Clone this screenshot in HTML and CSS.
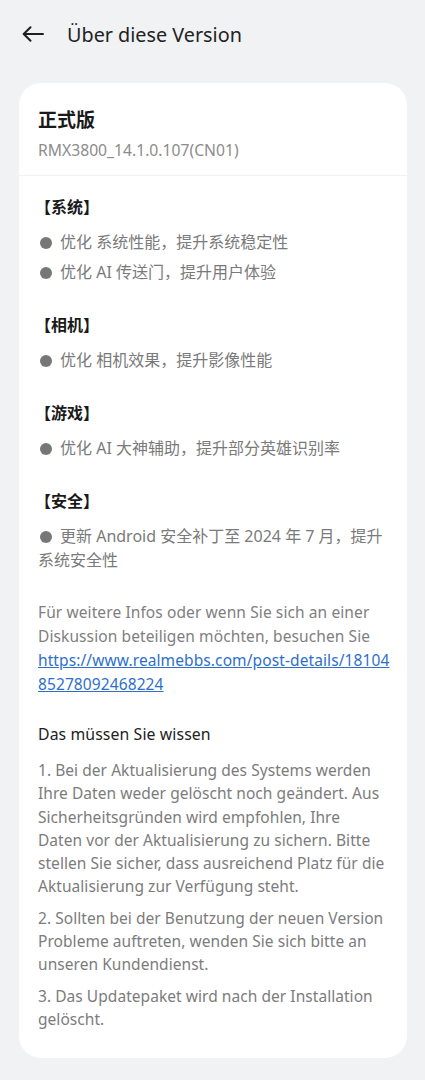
FILE: index.html
```html
<!DOCTYPE html>
<html lang="de">
<head>
<meta charset="utf-8">
<title>Über diese Version</title>
<link rel="stylesheet" href="styles.css">
</head>
<body>
<header class="topbar">
  <svg class="back" width="22" height="16" viewBox="0 0 22 16" aria-hidden="true">
    <path d="M21 8H2 M8.5 1.2L1.7 8l6.8 6.8" fill="none" stroke="#1f1f1f" stroke-width="2" stroke-linecap="round" stroke-linejoin="round"/>
  </svg>
  <h1 class="title">Über diese Version</h1>
</header>
<main class="card">
  <div class="card-head">
    <div class="ver-name">正式版</div>
    <div class="ver-code">RMX3800_14.1.0.107(CN01)</div>
  </div>
  <div class="card-body">
    <section class="sec">
      <h2 class="sec-title">【系统】</h2>
      <p class="item"><span class="dot"></span>优化 系统性能，提升系统稳定性</p>
      <p class="item"><span class="dot"></span>优化 AI 传送门，提升用户体验</p>
    </section>
    <section class="sec">
      <h2 class="sec-title">【相机】</h2>
      <p class="item"><span class="dot"></span>优化 相机效果，提升影像性能</p>
    </section>
    <section class="sec">
      <h2 class="sec-title">【游戏】</h2>
      <p class="item"><span class="dot"></span>优化 AI 大神辅助，提升部分英雄识别率</p>
    </section>
    <section class="sec">
      <h2 class="sec-title">【安全】</h2>
      <p class="item"><span class="dot"></span>更新 Android 安全补丁至 2024 年 7 月，提升<br>系统安全性</p>
    </section>
    <p class="more">Für weitere Infos oder wenn Sie sich an einer<br>Diskussion beteiligen möchten, besuchen Sie<br><a class="link" href="#">https://www.realmebbs.com/post-details/18104<br>85278092468224</a></p>
    <h3 class="know-title">Das müssen Sie wissen</h3>
    <ol class="know">
      <li>1. Bei der Aktualisierung des Systems werden<br>Ihre Daten weder gelöscht noch geändert. Aus<br>Sicherheitsgründen wird empfohlen, Ihre<br>Daten vor der Aktualisierung zu sichern. Bitte<br>stellen Sie sicher, dass ausreichend Platz für die<br>Aktualisierung zur Verfügung steht.</li>
      <li>2. Sollten bei der Benutzung der neuen Version<br>Probleme auftreten, wenden Sie sich bitte an<br>unseren Kundendienst.</li>
      <li>3. Das Updatepaket wird nach der Installation<br>gelöscht.</li>
    </ol>
  </div>
</main>
</body>
</html>
```
FILE: styles.css
```css
* { box-sizing: border-box; }
html, body { margin: 0; padding: 0; }
body {
  background: #f1f2f4;
  font-family: "Noto Sans", "Noto Sans CJK SC", sans-serif;
  color: #1f1f1f;
  width: 425px;
  min-height: 1080px;
}
.topbar {
  height: 68px;
  display: flex;
  align-items: center;
  padding-left: 22px;
}
.back { display: block; flex: none; }
.title {
  margin: 0 0 0 23px;
  font-size: 19.8px;
  font-weight: 400;
  color: #222;
}
.card {
  margin: 15px 18px 0 19px;
  background: #fff;
  border-radius: 22px;
  padding-bottom: 27px;
}
.card-head {
  padding: 22px 19px 14px;
  border-bottom: 1px solid #f1f1f2;
}
.ver-name {
  font-family: "Noto Sans CJK SC", sans-serif;
  font-size: 19px;
  font-weight: 700;
  line-height: 28px;
  color: #1a1a1a;
}
.ver-code {
  margin-top: 6px;
  font-size: 15.7px;
  line-height: 22px;
  color: #8c8c8c;
}
.card-body {
  padding: 18px 19px 0;
}
.sec { margin-bottom: 28px; }
.sec-title {
  margin: 0 0 12px -3px;
  font-family: "Noto Sans CJK SC", sans-serif;
  font-size: 16px;
  font-weight: 700;
  line-height: 24px;
  color: #1a1a1a;
}
.item {
  margin: 0 0 6px;
  font-family: "Noto Sans", "Noto Sans CJK SC", sans-serif;
  font-size: 16px;
  line-height: 24px;
  color: #7a7a7a;
}
.item:last-child { margin-bottom: 0; }
.dot {
  display: inline-block;
  width: 12px;
  height: 12px;
  border-radius: 50%;
  background: #777;
  margin: 0 8px 0 2px;
  vertical-align: -1px;
}
.more {
  margin: 0 0 26px;
  font-size: 15.5px;
  letter-spacing: 0.1px;
  line-height: 24px;
  color: #808080;
  white-space: nowrap;
}
.link {
  color: #2d6fcc;
  text-decoration: underline;
}
.know-title {
  margin: 0 0 13px;
  font-size: 15.8px;
  letter-spacing: 0.1px;
  font-weight: 400;
  line-height: 24px;
  color: #222;
}
.know {
  list-style: none;
  margin: 0;
  padding: 0;
}
.know li {
  font-size: 15.5px;
  letter-spacing: 0.05px;
  line-height: 23.3px;
  color: #7c7c7c;
  margin-bottom: 8px;
  white-space: nowrap;
}
.know li:last-child { margin-bottom: 0; }
```
